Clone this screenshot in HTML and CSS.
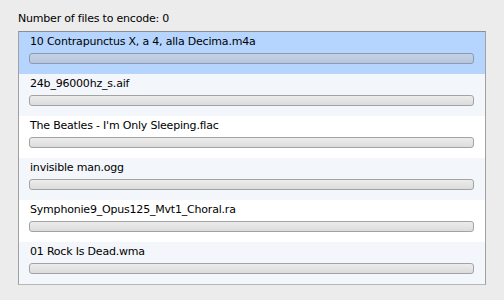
FILE: index.html
```html
<!DOCTYPE html>
<html lang="en">
<head>
    <meta charset="UTF-8">
    <title>Encoder</title>
    <link rel="stylesheet" href="styles.css">
</head>
<body>
    <div class="panel">
        <div class="count">Number of files to encode: 0</div>
        <div class="file-list">
            <div class="file selected">
                <div class="name">10 Contrapunctus X, a 4, alla Decima.m4a</div>
                <div class="bar"></div>
            </div>
            <div class="file alt">
                <div class="name">24b_96000hz_s.aif</div>
                <div class="bar"></div>
            </div>
            <div class="file">
                <div class="name">The Beatles - I'm Only Sleeping.flac</div>
                <div class="bar"></div>
            </div>
            <div class="file alt">
                <div class="name">invisible man.ogg</div>
                <div class="bar"></div>
            </div>
            <div class="file">
                <div class="name">Symphonie9_Opus125_Mvt1_Choral.ra</div>
                <div class="bar"></div>
            </div>
            <div class="file alt">
                <div class="name">01 Rock Is Dead.wma</div>
                <div class="bar"></div>
            </div>
        </div>
    </div>
</body>
</html>
```

FILE: styles.css
```css
html, body {
    margin: 0;
    background: #ececec;
}
body {
    font-family: "DejaVu Sans", sans-serif;
    font-size: 11px;
    letter-spacing: -0.2px;
    color: #000;
}
.panel {
    padding: 12px 18px 0 18px;
}
.count {
    height: 19px;
    line-height: 14px;
}
.file-list {
    width: 466px;
    border: 1px solid #a0a0a0;
    border-top-color: #8e8e8e;
    border-bottom-color: #b8b8b8;
    background: #fff;
}
.file {
    height: 42px;
    padding: 2px 11px 0 10px;
    box-sizing: border-box;
}
.file.alt {
    background: #f3f6fa;
}
.file.selected {
    background: #b5d5ff;
}
.name {
    line-height: 15px;
    padding-left: 1px;
}
.bar {
    height: 11px;
    margin-top: 4px;
    box-sizing: border-box;
    border: 1px solid #a3a3a3;
    border-radius: 3px;
    background: linear-gradient(to bottom, #ececec, #dcdcdc);
}
.selected .bar {
    border-color: #8c9bb0;
    background: linear-gradient(to bottom, #c4d2e6, #b6c6dc);
}
```
